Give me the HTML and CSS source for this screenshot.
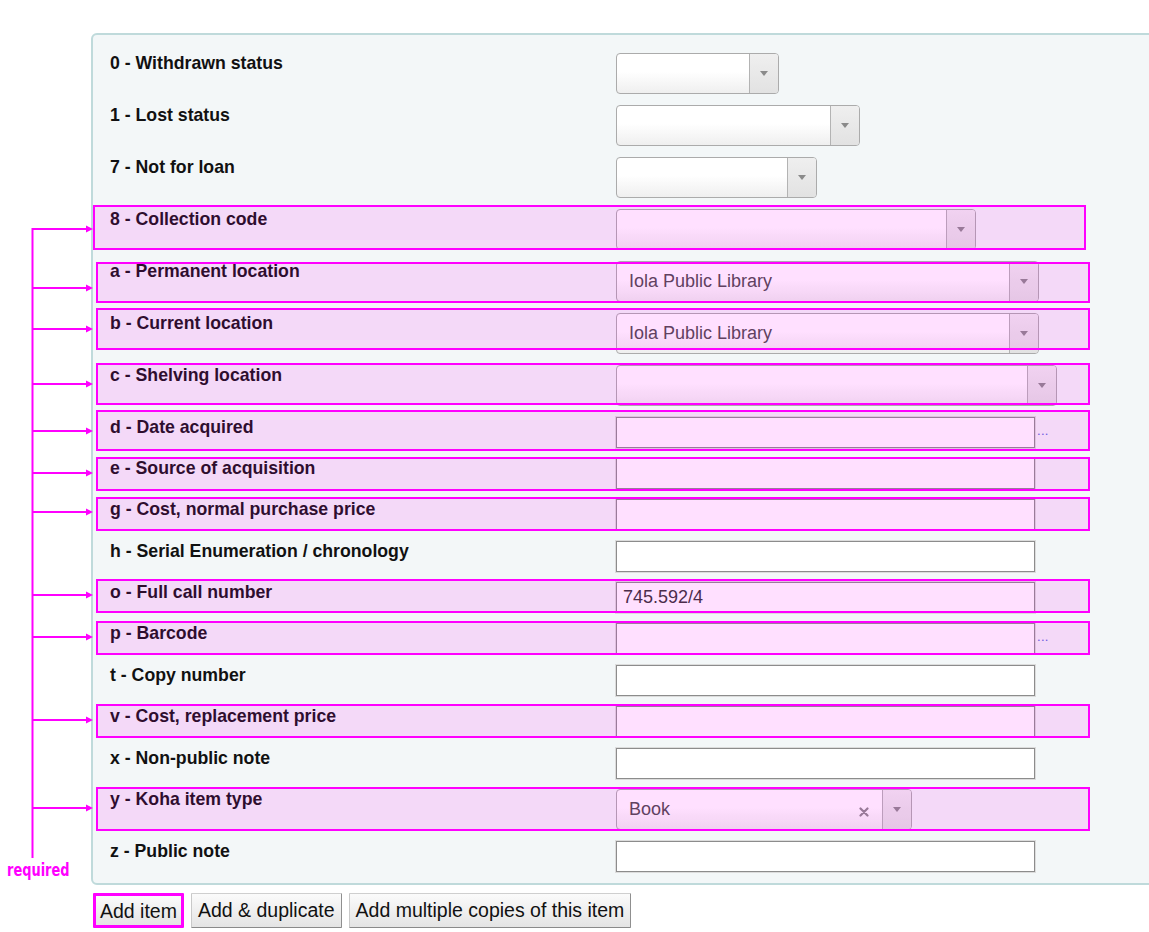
FILE: index.html
```html
<!DOCTYPE html>
<html lang="en">
<head>
<meta charset="utf-8">
<title>Add item</title>
<link rel="stylesheet" href="styles.css">
</head>
<body>
<div class="page">
  <fieldset class="panel">
    <ol class="fields">
      <li class="field is-select"><label class="lbl">0 - Withdrawn status</label><div class="ctl"><div class="select w163"><span class="sel-text"></span><span class="sel-arrow"></span></div></div></li>
      <li class="field is-select"><label class="lbl">1 - Lost status</label><div class="ctl"><div class="select w244"><span class="sel-text"></span><span class="sel-arrow"></span></div></div></li>
      <li class="field is-select"><label class="lbl">7 - Not for loan</label><div class="ctl"><div class="select w201"><span class="sel-text"></span><span class="sel-arrow"></span></div></div></li>
      <li class="field is-select"><label class="lbl">8 - Collection code</label><div class="ctl"><div class="select w360"><span class="sel-text"></span><span class="sel-arrow"></span></div></div></li>
      <li class="field is-select"><label class="lbl">a - Permanent location</label><div class="ctl"><div class="select w423"><span class="sel-text">Iola Public Library</span><span class="sel-arrow"></span></div></div></li>
      <li class="field is-select"><label class="lbl">b - Current location</label><div class="ctl"><div class="select w423"><span class="sel-text">Iola Public Library</span><span class="sel-arrow"></span></div></div></li>
      <li class="field is-select"><label class="lbl">c - Shelving location</label><div class="ctl"><div class="select w441"><span class="sel-text"></span><span class="sel-arrow"></span></div></div></li>
      <li class="field"><label class="lbl">d - Date acquired</label><div class="ctl"><input class="txt" type="text" value=""><span class="dots">...</span></div></li>
      <li class="field"><label class="lbl">e - Source of acquisition</label><div class="ctl"><input class="txt" type="text" value=""></div></li>
      <li class="field"><label class="lbl">g - Cost, normal purchase price</label><div class="ctl"><input class="txt" type="text" value=""></div></li>
      <li class="field"><label class="lbl">h - Serial Enumeration / chronology</label><div class="ctl"><input class="txt" type="text" value=""></div></li>
      <li class="field"><label class="lbl">o - Full call number</label><div class="ctl"><input class="txt" type="text" value="745.592/4"></div></li>
      <li class="field"><label class="lbl">p - Barcode</label><div class="ctl"><input class="txt" type="text" value=""><span class="dots">...</span></div></li>
      <li class="field"><label class="lbl">t - Copy number</label><div class="ctl"><input class="txt" type="text" value=""></div></li>
      <li class="field"><label class="lbl">v - Cost, replacement price</label><div class="ctl"><input class="txt" type="text" value=""></div></li>
      <li class="field"><label class="lbl">x - Non-public note</label><div class="ctl"><input class="txt" type="text" value=""></div></li>
      <li class="field is-select"><label class="lbl">y - Koha item type</label><div class="ctl"><div class="select w296"><span class="sel-text">Book</span><span class="sel-clear"><svg width="10" height="10" viewBox="0 0 10 10"><path d="M1.5 1.5 L8.5 8.5 M8.5 1.5 L1.5 8.5" stroke="#8a8a8a" stroke-width="2.2" stroke-linecap="round"/></svg></span><span class="sel-arrow"></span></div></div></li>
      <li class="field"><label class="lbl">z - Public note</label><div class="ctl"><input class="txt" type="text" value=""></div></li>
    </ol>
  </fieldset>
  <div class="actions">
    <button class="btn btn-marked" type="button">Add item</button>
    <button class="btn" type="button">Add &amp; duplicate</button>
    <button class="btn" type="button">Add multiple copies of this item</button>
  </div>

  <svg class="annot" width="1149" height="932" viewBox="0 0 1149 932">
    <g class="boxes" fill="rgba(255,0,255,0.12)" stroke="#ff00ff" stroke-width="2">
      <rect x="94" y="206" width="991" height="43"/>
      <rect x="97" y="263" width="992" height="39"/>
      <rect x="97" y="309" width="992" height="40"/>
      <rect x="97" y="364" width="992" height="40"/>
      <rect x="97" y="411" width="992" height="39"/>
      <rect x="97" y="458" width="992" height="32"/>
      <rect x="97" y="498" width="992" height="32"/>
      <rect x="97" y="580" width="992" height="32"/>
      <rect x="97" y="622" width="992" height="32"/>
      <rect x="97" y="705" width="992" height="32"/>
      <rect x="97" y="788" width="992" height="42"/>
    </g>
    <g stroke="#ff00ff" stroke-width="2" fill="none">
      <line x1="32.5" y1="228" x2="32.5" y2="858"/>
      <line x1="32.5" y1="229" x2="88" y2="229"/>
      <line x1="32.5" y1="288" x2="88" y2="288"/>
      <line x1="32.5" y1="329" x2="88" y2="329"/>
      <line x1="32.5" y1="384" x2="88" y2="384"/>
      <line x1="32.5" y1="431" x2="88" y2="431"/>
      <line x1="32.5" y1="473" x2="88" y2="473"/>
      <line x1="32.5" y1="512" x2="88" y2="512"/>
      <line x1="32.5" y1="595" x2="88" y2="595"/>
      <line x1="32.5" y1="637" x2="88" y2="637"/>
      <line x1="32.5" y1="720" x2="88" y2="720"/>
      <line x1="32.5" y1="808" x2="88" y2="808"/>
    </g>
    <g fill="#ff00ff">
      <polygon points="93,229 86,225.5 86,232.5"/>
      <polygon points="93,288 86,284.5 86,291.5"/>
      <polygon points="93,329 86,325.5 86,332.5"/>
      <polygon points="93,384 86,380.5 86,387.5"/>
      <polygon points="93,431 86,427.5 86,434.5"/>
      <polygon points="93,473 86,469.5 86,476.5"/>
      <polygon points="93,512 86,508.5 86,515.5"/>
      <polygon points="93,595 86,591.5 86,598.5"/>
      <polygon points="93,637 86,633.5 86,640.5"/>
      <polygon points="93,720 86,716.5 86,723.5"/>
      <polygon points="93,808 86,804.5 86,811.5"/>
    </g>
  </svg>
  <div class="required">required</div>
</div>
</body>
</html>
```
FILE: styles.css
```css
* {
  box-sizing: border-box;
}

html,
body {
  margin: 0;
  padding: 0;
  background: #ffffff;
  overflow: hidden;
}

body {
  font-family: "Liberation Sans", Arial, sans-serif;
  color: #000;
}

.page {
  position: relative;
  width: 1149px;
  height: 932px;
  padding: 33px 0 0 91px;
  overflow: hidden;
}

/* ---------- panel ---------- */
.panel {
  margin: 0 -60px 0 0;
  padding: 0;
  min-width: 0;
  border: 2px solid #bfdadb;
  border-radius: 6px;
  background: #f3f7f8;
}

.fields {
  list-style: none;
  margin: 0;
  padding: 12.5px 0 5.5px;
}

.field {
  display: grid;
  grid-template-columns: 506px auto;
  align-items: start;
  padding: 5px 0 5.4px 17px;
}

.field.is-select {
  padding-bottom: 6px;
}

.lbl {
  font-size: 17.7px;
  font-weight: bold;
  line-height: 20px;
  color: #111;
}

.ctl {
  display: flex;
  align-items: center;
}

/* ---------- select2-like widgets ---------- */
.select {
  display: flex;
  align-items: stretch;
  height: 41px;
  border: 1px solid #ababab;
  border-radius: 4px;
  background: linear-gradient(#ffffff 45%, #efefef);
}

.w163 { width: 163px; }
.w201 { width: 201px; }
.w244 { width: 244px; }
.w296 { width: 296px; }
.w360 { width: 360px; }
.w423 { width: 423px; }
.w441 { width: 441px; }

.sel-text {
  flex: 1;
  padding-left: 12px;
  font-size: 18px;
  line-height: 39px;
  color: #4a4a4a;
  white-space: nowrap;
}

.sel-clear {
  display: flex;
  align-items: center;
  padding: 4px 13px 0 0;
}

.sel-arrow {
  display: flex;
  align-items: center;
  justify-content: center;
  width: 29px;
  flex: none;
  border-left: 1px solid #b3b3b3;
  border-radius: 0 3px 3px 0;
  background: linear-gradient(#efefef, #e2e2e2);
}

.sel-arrow::before {
  content: "";
  width: 0;
  height: 0;
  border-left: 4px solid transparent;
  border-right: 4px solid transparent;
  border-top: 5px solid #8a8a8a;
}

/* ---------- text inputs ---------- */
.txt {
  width: 419px;
  height: 31px;
  margin: 0;
  padding: 0 6px;
  border: 1px solid #8c8c8c;
  box-shadow: 0 0 0 1px #dcdcdc;
  background: #ffffff;
  font-family: "Liberation Sans", Arial, sans-serif;
  font-size: 18px;
  color: #333;
  outline: none;
}

.dots {
  margin: 0 0 4px 2px;
  font-size: 13px;
  letter-spacing: 0.3px;
  line-height: 13px;
  color: #5466d8;
}

/* ---------- buttons ---------- */
.actions {
  display: flex;
  gap: 7px;
  margin-top: 8px;
  padding-left: 2px;
}

.btn {
  height: 35px;
  margin: 0;
  padding: 0 6px;
  border: 1px solid;
  border-color: #cfcfcf #8f8f8f #8a8a8a #c9c9c9;
  border-radius: 1px;
  background: linear-gradient(#fbfbfb, #e4e4e4);
  font-family: "Liberation Sans", Arial, sans-serif;
  font-size: 19.5px;
  line-height: 31px;
  color: #111;
  white-space: nowrap;
}

.btn-marked {
  padding: 0 4px;
  border: 3px solid #ff00ff;
}

/* ---------- annotation overlay ---------- */
.annot {
  position: absolute;
  left: 0;
  top: 0;
  pointer-events: none;
}

.required {
  position: absolute;
  left: 7px;
  top: 859px;
  font-family: "DejaVu Sans Condensed", "DejaVu Sans", sans-serif;
  font-size: 18px;
  font-weight: bold;
  color: #ff00ff;
  transform: scaleX(0.8);
  transform-origin: left top;
}
```
